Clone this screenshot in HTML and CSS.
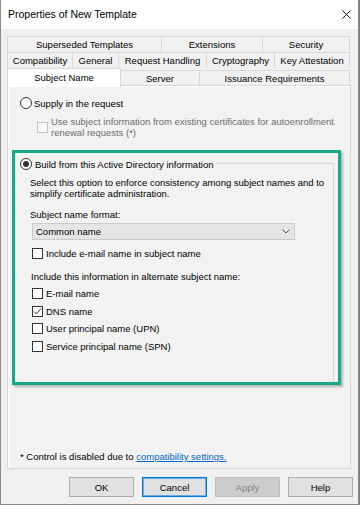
FILE: index.html
```html
<!DOCTYPE html>
<html lang="en">
  <head>
    <meta charset="UTF-8" />
    <meta name="viewport" content="width=device-width, initial-scale=1.0" />
    <title>Properties of New Template</title>
    <link rel="stylesheet" href="styles.css">
  </head>
  <body>
    <div class="window">
      <div class="titlebar">
        <span class="title">Properties of New Template</span>
        <svg class="close" width="9" height="9" viewBox="0 0 9 9">
          <path d="M0.5 0.5 L8.5 8.5 M8.5 0.5 L0.5 8.5" stroke="#111" stroke-width="1" fill="none" />
        </svg>
      </div>
      <div class="dialog">
        <div class="tabs">
          <div class="tab-row row-back">
            <div class="tab">Superseded Templates</div>
            <div class="tab">Extensions</div>
            <div class="tab">Security</div>
          </div>
          <div class="tab-row row-mid">
            <div class="tab">Compatibility</div>
            <div class="tab">General</div>
            <div class="tab">Request Handling</div>
            <div class="tab">Cryptography</div>
            <div class="tab">Key Attestation</div>
          </div>
          <div class="tab-row row-front">
            <div class="tab selected">Subject Name</div>
            <div class="tab">Server</div>
            <div class="tab">Issuance Requirements</div>
          </div>
        </div>

        <div class="panel">
          <div class="option">
            <span class="radio"></span>
            <span>Supply in the request</span>
          </div>
          <div class="sub-option disabled">
            <span class="checkbox"></span>
            <span class="sub-text">Use subject information from existing certificates for autoenrollment<br>renewal requests (*)</span>
          </div>

          <div class="highlight">
            <div class="group-head">
              <span class="radio checked"></span>
              <span class="group-label">Build from this Active Directory information</span>
              <span class="group-line"></span>
            </div>
            <div class="group-body">
              <p class="desc">Select this option to enforce consistency among subject names and to<br>simplify certificate administration.</p>
              <div class="field-label">Subject name format:</div>
              <div class="select">
                <span>Common name</span>
                <svg width="8" height="5" viewBox="0 0 8 5">
                  <path d="M0.5 0.5 L4 4 L7.5 0.5" stroke="#555" stroke-width="1" fill="none" />
                </svg>
              </div>
              <div class="check-row first">
                <span class="checkbox"></span>
                <span>Include e-mail name in subject name</span>
              </div>
              <div class="field-label alt">Include this information in alternate subject name:</div>
              <div class="check-list">
                <div class="check-row">
                  <span class="checkbox"></span>
                  <span>E-mail name</span>
                </div>
                <div class="check-row">
                  <span class="checkbox">
                    <svg width="9" height="9" viewBox="0 0 9 9">
                      <path d="M1 4.5 L3.5 7 L8 1.5" stroke="#333" stroke-width="1" fill="none" />
                    </svg>
                  </span>
                  <span>DNS name</span>
                </div>
                <div class="check-row">
                  <span class="checkbox"></span>
                  <span>User principal name (UPN)</span>
                </div>
                <div class="check-row">
                  <span class="checkbox"></span>
                  <span>Service principal name (SPN)</span>
                </div>
              </div>
            </div>
          </div>

          <p class="note">* Control is disabled due to <a href="#">compatibility settings.</a></p>
        </div>

        <div class="buttons">
          <button>OK</button>
          <button class="focused">Cancel</button>
          <button disabled>Apply</button>
          <button>Help</button>
        </div>
      </div>
    </div>
  </body>
</html>
```

FILE: styles.css
```css
* {
  box-sizing: border-box;
}
body {
  margin: 0;
  background-color: #7d7d7d;
  font-family: "Liberation Sans", Arial, sans-serif;
  font-size: 9.5px;
  line-height: 11px;
  color: #000;
}
.window {
  width: 359px;
  height: 505px;
  background-color: #f0f0f0;
  border: 1px solid #8a8a8a;
  border-top: none;
  display: flex;
  flex-direction: column;
}
.titlebar {
  height: 29px;
  flex-shrink: 0;
  background-color: #fff;
  display: flex;
  align-items: center;
  justify-content: space-between;
  padding: 0 7px 0 7px;
}
.title {
  font-size: 10.5px;
}
.dialog {
  flex: 1;
  display: flex;
  flex-direction: column;
  padding: 7px 7px 0 6px;
}

/* tabs */
.tabs {
  display: flex;
  flex-direction: column;
  width: 343px;
}
.tab-row {
  display: grid;
  align-items: end;
}
.row-back {
  grid-template-columns: 155px 101px 87px;
  height: 16px;
}
.row-mid {
  grid-template-columns: 66px 46px 88px 68px 75px;
  height: 16px;
}
.row-front {
  grid-template-columns: 114px 79px 150px;
  height: 17px;
}
.tab {
  height: 16px;
  border: 1px solid #d9d9d9;
  border-bottom: none;
  background-color: #f0f0f0;
  text-align: center;
  line-height: 15px;
  white-space: nowrap;
}
.tab + .tab {
  border-left: none;
}
.row-front .tab {
  height: 16px;
  line-height: 16px;
}
.row-front .tab.selected {
  position: relative;
  z-index: 1;
  height: 19px;
  margin-bottom: -1px;
  background-color: #fff;
  line-height: 17px;
}
.row-front .tab.selected + .tab {
  border-left: none;
}

/* panel */
.panel {
  height: 384px;
  border: 1px solid #d9d9d9;
  box-shadow: inset 1px 1px 0 #fff;
  background-color: #f2f2f2;
  display: flex;
  flex-direction: column;
  padding: 11px 0 6px 0;
}
.option {
  display: flex;
  align-items: center;
  gap: 2px;
  padding-left: 12px;
  height: 12px;
}
.radio {
  width: 12px;
  height: 12px;
  flex-shrink: 0;
  border: 1px solid #333;
  border-radius: 50%;
  background-color: #fff;
  display: flex;
  align-items: center;
  justify-content: center;
}
.radio.checked::after {
  content: '';
  width: 6px;
  height: 6px;
  border-radius: 50%;
  background-color: #333;
}
.checkbox {
  width: 11px;
  height: 11px;
  flex-shrink: 0;
  border: 1px solid #333;
  background-color: #fff;
  display: flex;
  align-items: center;
  justify-content: center;
}
.sub-option {
  display: flex;
  align-items: center;
  gap: 3px;
  margin-top: 7px;
  padding-left: 29px;
}
.sub-option.disabled {
  color: #6d6d6d;
}
.sub-option.disabled .checkbox {
  border-color: #c4c4c4;
  background-color: #f7f7f7;
}

/* highlighted group */
.highlight {
  margin: 12px 0 0 4px;
  width: 329px;
  border: 3px solid #17a98b;
  box-shadow: 2px 2px 2px rgba(0, 0, 0, 0.25);
}
.group-head {
  display: flex;
  align-items: center;
  height: 12px;
  margin: 5px 4px 0 5px;
}
.group-label {
  margin-left: 3px;
  white-space: nowrap;
}
.group-line {
  flex: 1;
  align-self: stretch;
  margin: 5px 0 0 3px;
  border-top: 1px solid #d6d6d6;
  border-right: 1px solid #d6d6d6;
}
.group-body {
  margin-right: 4px;
  border-right: 1px solid #d6d6d6;
  padding: 7px 0 30px 15px;
}
.desc {
  margin: 0;
}
.field-label {
  margin-top: 10px;
}
.field-label.alt {
  margin-top: 12px;
  margin-left: 1px;
}
.select {
  margin: 3px 0 0 2px;
  width: 263px;
  height: 17px;
  background-color: #e5e5e5;
  border: 1px solid #cbcbcb;
  display: flex;
  align-items: center;
  justify-content: space-between;
  padding: 0 4px 0 3px;
}
.check-row {
  display: flex;
  align-items: center;
  gap: 3px;
  height: 11px;
  margin-left: 2px;
}
.check-row.first {
  margin-top: 8px;
}
.check-list {
  display: flex;
  flex-direction: column;
  gap: 6.5px;
  margin-top: 6px;
}

/* footer */
.note {
  margin: auto 0 0 0;
  padding-left: 12px;
}
.note a {
  color: #0066cc;
}
.buttons {
  display: flex;
  justify-content: flex-end;
  gap: 8px;
  margin: 8px -2px 0 0;
}
button {
  width: 65px;
  height: 20px;
  padding: 0;
  font-family: "Liberation Sans", Arial, sans-serif;
  font-size: 9.5px;
  color: #000;
  background-color: #e1e1e1;
  border: 1px solid #adadad;
}
button.focused {
  border-color: #0078d7;
  box-shadow: inset 0 0 0 1px rgba(0, 120, 215, 0.5);
}
button:disabled {
  background-color: #cccccc;
  border-color: #bfbfbf;
  color: #838383;
}
```
